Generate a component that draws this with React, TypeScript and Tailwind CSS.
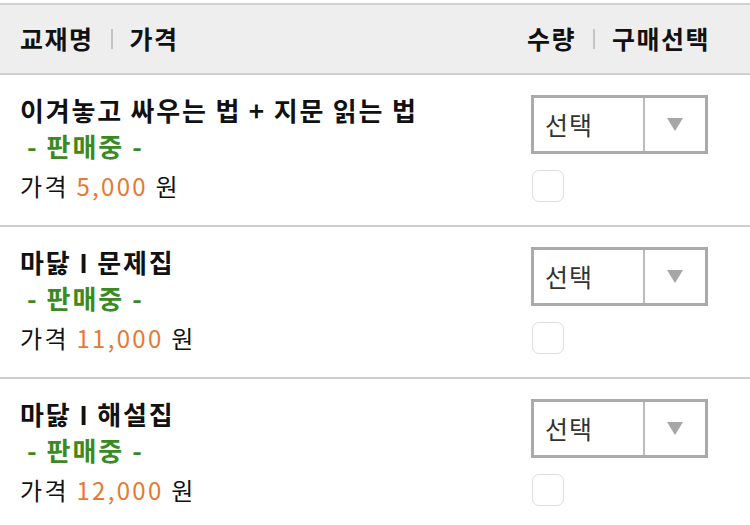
const items = [
  { title: "이겨놓고 싸우는 법 + 지문 읽는 법", price: "5,000" },
  { title: "마닳 I 문제집", price: "11,000" },
  { title: "마닳 I 해설집", price: "12,000" },
];

function SelectBox() {
  return (
    <div className="flex h-[59px] w-[177px] border-[3px] border-[#aaaaaa] bg-white">
      <div className="flex w-[111px] items-center border-r-2 border-[#bbbbbb] pl-[11px] text-[25px] tracking-[1px] text-[#333]">
        선택
      </div>
      <div className="flex flex-1 items-center justify-center">
        <svg width="16" height="13" viewBox="0 0 16 13">
          <path d="M0 0 H16 L8 13 Z" fill="#a6a6a6" />
        </svg>
      </div>
    </div>
  );
}

function Row({ title, price }: { title: string; price: string }) {
  return (
    <div className="flex h-[152px] border-b-2 border-[#d0d0d0] pl-5 pr-[42px] pt-5">
      <div className="flex-1">
        <div className="text-[26px] font-bold leading-[30px] tracking-[1.8px] text-[#111]">{title}</div>
        <div className="mt-[6px] pl-[7px] text-[26px] font-bold leading-[30px] tracking-[2px] text-[#3a8a22]">- 판매중 -</div>
        <div className="mt-[10px] text-[24px] leading-[30px] tracking-[2.3px] text-[#111]">
          가격 <span className="text-[#e8792f]">{price}</span> 원
        </div>
      </div>
      <div className="w-[177px]">
        <SelectBox />
        <div className="mt-4 ml-[1px] h-[32px] w-[32px] rounded-[7px] border-[1.5px] border-[#dddddd] bg-white" />
      </div>
    </div>
  );
}

export default function App() {
  return (
    <div className="h-[525px] w-[750px] overflow-hidden bg-white pt-[3px] font-['Noto_Sans_CJK_KR',sans-serif]">
      <div className="flex h-[72px] items-center justify-between border-y-2 border-[#cfcfcf] bg-[#eeeeee] pl-5 pr-[40px] text-[25px] font-bold tracking-[1.5px] text-[#111]">
        <div className="flex items-center">
          <span>교재명</span>
          <span className="mx-[17px] h-[20px] w-[2px] bg-[#c4c4c4]" />
          <span>가격</span>
        </div>
        <div className="flex items-center">
          <span>수량</span>
          <span className="mx-[17px] h-[20px] w-[2px] bg-[#c4c4c4]" />
          <span>구매선택</span>
        </div>
      </div>
      {items.map((it) => (
        <Row key={it.title} title={it.title} price={it.price} />
      ))}
    </div>
  );
}
